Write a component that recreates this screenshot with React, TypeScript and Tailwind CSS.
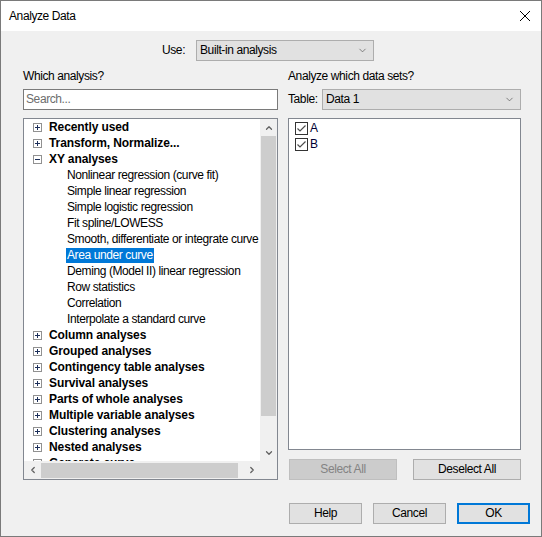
import { ChevronDown, ChevronUp, ChevronLeft, ChevronRight } from "lucide-react";

type Row = { label: string; group?: boolean; open?: boolean; selected?: boolean };

const rows: Row[] = [
  { label: "Recently used", group: true },
  { label: "Transform, Normalize...", group: true },
  { label: "XY analyses", group: true, open: true },
  { label: "Nonlinear regression (curve fit)" },
  { label: "Simple linear regression" },
  { label: "Simple logistic regression" },
  { label: "Fit spline/LOWESS" },
  { label: "Smooth, differentiate or integrate curve" },
  { label: "Area under curve", selected: true },
  { label: "Deming (Model II) linear regression" },
  { label: "Row statistics" },
  { label: "Correlation" },
  { label: "Interpolate a standard curve" },
  { label: "Column analyses", group: true },
  { label: "Grouped analyses", group: true },
  { label: "Contingency table analyses", group: true },
  { label: "Survival analyses", group: true },
  { label: "Parts of whole analyses", group: true },
  { label: "Multiple variable analyses", group: true },
  { label: "Clustering analyses", group: true },
  { label: "Nested analyses", group: true },
  { label: "Generate curve", group: true },
];

function Expander({ open }: { open?: boolean }) {
  return (
    <div className="relative h-[9px] w-[9px] shrink-0 border border-[#919191] bg-white">
      <div className="absolute left-[1px] top-[3px] h-[1px] w-[5px] bg-[#1c2f5a]" />
      {!open && <div className="absolute left-[3px] top-[1px] h-[5px] w-[1px] bg-[#1c2f5a]" />}
    </div>
  );
}

function Check() {
  return (
    <div className="flex h-[13px] w-[13px] shrink-0 items-center justify-center border border-[#333333] bg-white">
      <svg width="11" height="11" viewBox="0 0 11 11">
        <path d="M1.5 5.5 L4 8 L9.5 2.5" fill="none" stroke="#4d4d4d" strokeWidth="1.2" />
      </svg>
    </div>
  );
}

function Combo({ value, className }: { value: string; className: string }) {
  return (
    <div className={`flex h-[21px] items-center justify-between border border-[#adadad] bg-[#e1e1e1] pl-[3px] pr-[5px] ${className}`}>
      <span>{value}</span>
      <ChevronDown className="h-[11px] w-[11px] text-[#555]" strokeWidth={1.5} />
    </div>
  );
}

function Btn({ label, disabled, def }: { label: string; disabled?: boolean; def?: boolean }) {
  return (
    <button
      className={`flex h-[21px] items-center justify-center ${
        def
          ? "border-2 border-[#0078d7] bg-[#e1e1e1]"
          : disabled
          ? "border border-[#bfbfbf] bg-[#cccccc] text-[#838383]"
          : "border border-[#adadad] bg-[#e1e1e1]"
      } ${label.includes("All") ? "w-[108px]" : "w-[73px]"}`}
    >
      {label}
    </button>
  );
}

export default function App() {
  return (
    <div
      className="flex h-[537px] w-[542px] flex-col border border-[#7a7a7a] bg-[#f0f0f0] text-[12px] leading-[15px] tracking-[-0.4px] text-black"
      style={{ fontFamily: '"Segoe UI", "Liberation Sans", Arial, sans-serif' }}
    >
      <div className="flex h-[30px] shrink-0 items-center justify-between bg-white pl-[8px] pr-[10px]">
        <span className="text-[12px]">Analyze Data</span>
        <svg width="12" height="12" viewBox="0 0 12 12">
          <path d="M1 1 L11 11 M11 1 L1 11" stroke="#000" strokeWidth="1" />
        </svg>
      </div>

      <div className="mt-[9px] flex items-center pl-[161px]">
        <span className="w-[34px]">Use:</span>
        <Combo value="Built-in analysis" className="w-[178px]" />
      </div>

      <div className="mt-[8px] flex gap-[10px] pl-[22px]">
        <div className="flex w-[255px] flex-col">
          <div className="h-[15px]">Which analysis?</div>
          <div className="mt-[5px] flex h-[21px] items-center border border-[#7a7a7a] bg-white px-[2px] text-[#6d6d6d]">
            Search...
          </div>
          <div className="mt-[8px] flex h-[362px] flex-col border border-[#828790] bg-white">
            <div className="flex min-h-0 flex-1">
              <div className="h-[342px] flex-1 overflow-hidden">
                {rows.map((r) => (
                  <div key={r.label} className="flex h-[16px] items-center whitespace-nowrap">
                    {r.group ? (
                      <>
                        <div className="ml-[9px] mr-[7px]">
                          <Expander open={r.open} />
                        </div>
                        <span className="font-bold tracking-[-0.1px]">{r.label}</span>
                      </>
                    ) : (
                      <span
                        className={`ml-[42px] px-[1px] ${r.selected ? "bg-[#0078d7] text-white" : ""}`}
                      >
                        {r.label}
                      </span>
                    )}
                  </div>
                ))}
              </div>
              <div className="flex w-[17px] shrink-0 flex-col bg-[#f0f0f0]">
                <div className="flex h-[17px] items-center justify-center">
                  <ChevronUp className="h-[10px] w-[10px] text-[#606060]" strokeWidth={3} />
                </div>
                <div className="mx-[1px] h-[280px] bg-[#cdcdcd]" />
                <div className="flex-1" />
                <div className="flex h-[17px] items-center justify-center">
                  <ChevronDown className="h-[10px] w-[10px] text-[#606060]" strokeWidth={3} />
                </div>
              </div>
            </div>
            <div className="flex h-[18px] shrink-0">
              <div className="flex flex-1 items-center bg-[#f0f0f0]">
                <div className="flex w-[17px] items-center justify-center">
                  <ChevronLeft className="h-[10px] w-[10px] text-[#606060]" strokeWidth={3} />
                </div>
                <div className="h-[15px] w-[197px] bg-[#cdcdcd]" />
                <div className="flex-1" />
                <div className="flex w-[17px] items-center justify-center">
                  <ChevronRight className="h-[10px] w-[10px] text-[#606060]" strokeWidth={3} />
                </div>
              </div>
              <div className="w-[17px] bg-[#f0f0f0]" />
            </div>
          </div>
        </div>

        <div className="flex w-[233px] flex-col">
          <div className="h-[15px]">Analyze which data sets?</div>
          <div className="mt-[5px] flex items-center">
            <span className="w-[34px]">Table:</span>
            <Combo value="Data 1" className="flex-1" />
          </div>
          <div className="mt-[8px] flex h-[332px] flex-col border border-[#828790] bg-white pl-[6px] pt-[1px]">
            {["A", "B"].map((l) => (
              <div key={l} className="flex h-[16px] items-center gap-[2px] text-[#000033]">
                <Check />
                <span>{l}</span>
              </div>
            ))}
          </div>
          <div className="mt-[9px] flex justify-between pl-[1px]">
            <Btn label="Select All" disabled />
            <Btn label="Deselect All" />
          </div>
        </div>
      </div>

      <div className="mt-[23px] flex gap-[11px] pl-[288px]">
        <Btn label="Help" />
        <Btn label="Cancel" />
        <Btn label="OK" def />
      </div>
    </div>
  );
}
